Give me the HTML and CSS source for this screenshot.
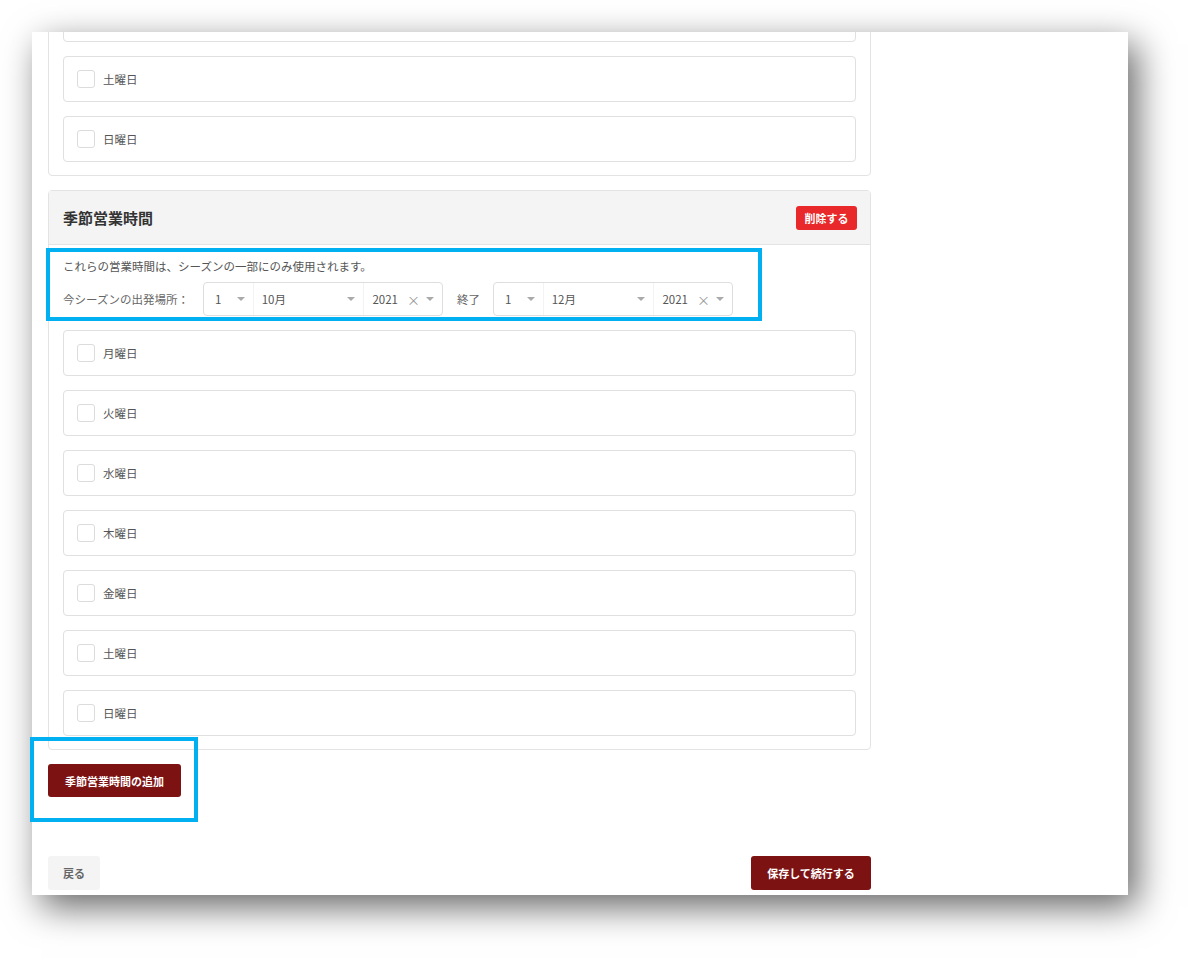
FILE: index.html
```html
<!DOCTYPE html>
<html lang="ja">
<head>
  <meta charset="UTF-8">
  <title>季節営業時間</title>
  <link rel="stylesheet" href="styles.css">
</head>
<body>

<div class="frame">
  <div class="sheet">
    <div class="content">

      <!-- 通常営業時間（上部はスクロールで隠れている） -->
      <div class="card card-top">
        <div class="day-list">
          <div class="day day-blank"></div>
          <label class="day"><span class="check"></span>土曜日</label>
          <label class="day"><span class="check"></span>日曜日</label>
        </div>
      </div>

      <!-- 季節営業時間 -->
      <div class="card">
        <div class="card-head">
          <h2>季節営業時間</h2>
          <button class="btn btn-danger">削除する</button>
        </div>
        <div class="card-body">
          <p class="note">これらの営業時間は、シーズンの一部にのみ使用されます。</p>
          <div class="date-row">
            <span class="label">今シーズンの出発場所：</span>
            <div class="date-select">
              <div class="seg seg-day">1<span class="caret"></span></div>
              <div class="seg seg-month">10月<span class="caret"></span></div>
              <div class="seg seg-year">2021<span class="clear">×</span><span class="caret"></span></div>
            </div>
            <span class="label label-end">終了</span>
            <div class="date-select">
              <div class="seg seg-day">1<span class="caret"></span></div>
              <div class="seg seg-month">12月<span class="caret"></span></div>
              <div class="seg seg-year">2021<span class="clear">×</span><span class="caret"></span></div>
            </div>
          </div>
          <div class="day-list">
            <label class="day"><span class="check"></span>月曜日</label>
            <label class="day"><span class="check"></span>火曜日</label>
            <label class="day"><span class="check"></span>水曜日</label>
            <label class="day"><span class="check"></span>木曜日</label>
            <label class="day"><span class="check"></span>金曜日</label>
            <label class="day"><span class="check"></span>土曜日</label>
            <label class="day"><span class="check"></span>日曜日</label>
          </div>
        </div>
      </div>

      <button class="btn btn-primary btn-add">季節営業時間の追加</button>

      <div class="footer">
        <button class="btn btn-back">戻る</button>
        <button class="btn btn-primary btn-save">保存して続行する</button>
      </div>

    </div>
  </div>

  <!-- 注目枠 -->
  <div class="mark mark-dates"></div>
  <div class="mark mark-add"></div>
</div>

</body>
</html>
```

FILE: styles.css
```css
html, body {
  margin: 0;
  background: #fff;
}

body {
  padding: 32px 0 65px 32px;
  font-family: "Noto Sans CJK JP", "Noto Sans", sans-serif;
  color: #555;
  font-size: 11.5px;
}

.frame {
  position: relative;
  width: 1096px;
  height: 863px;
}

.sheet {
  width: 100%;
  height: 100%;
  overflow: hidden;
  background: #fff;
  box-shadow: 9px 12px 34px rgba(0,0,0,0.6);
}

.content {
  width: 823px;
  padding-left: 16px;
}

.card {
  border: 1px solid #e3e3e3;
  border-radius: 4px;
  margin-bottom: 14px;
}

.card-top {
  margin-top: -51px;
  padding: 14px 14px 13px;
}

.card-head {
  display: flex;
  align-items: center;
  justify-content: space-between;
  height: 53px;
  padding: 0 13px 0 14px;
  background: #f4f4f4;
  border-bottom: 1px solid #e3e3e3;
}

.card-head h2 {
  margin: 0;
  font-size: 15px;
  font-weight: bold;
  color: #333;
}

.card-body {
  padding: 12px 14px 13px;
}

.note {
  margin: 0 0 7px;
  line-height: 18px;
}

.date-row {
  display: flex;
  align-items: center;
  height: 34px;
  margin-bottom: 14px;
}

.label {
  width: 140px;
  color: #666;
}

.label-end {
  width: auto;
  margin: 0 13px 0 14px;
}

.date-select {
  display: flex;
  width: 238px;
  height: 32px;
  border: 1px solid #dedede;
  border-radius: 4px;
}

.seg {
  display: flex;
  align-items: center;
  padding: 0 8px 0 11px;
  color: #555;
}

.seg + .seg {
  border-left: 1px solid #f3f3f3;
}

.seg-day {
  width: 30px;
  justify-content: space-between;
}

.seg-month {
  width: 95px;
  justify-content: space-between;
  padding-left: 8px;
}

.seg-year {
  flex: 1;
  padding-left: 8px;
}

.caret {
  width: 0;
  height: 0;
  border-left: 4px solid transparent;
  border-right: 4px solid transparent;
  border-top: 4px solid #aaa;
}

.seg-year .caret {
  margin-left: 6px;
}

.clear {
  margin-left: 9px;
  color: #999;
  font-size: 13px;
}

.day-list {
  display: flex;
  flex-direction: column;
  gap: 14px;
}

.day {
  display: flex;
  align-items: center;
  height: 44px;
  padding: 0 13px;
  border: 1px solid #e0e0e0;
  border-radius: 4px;
  color: #555;
}

.check {
  width: 16px;
  height: 16px;
  margin-right: 8px;
  border: 1px solid #dcdcdc;
  border-radius: 3px;
  background: #fff;
}

.btn {
  border: none;
  border-radius: 3px;
  font-family: inherit;
  font-size: 11px;
  font-weight: bold;
  cursor: pointer;
}

.btn-danger {
  width: 61px;
  height: 24px;
  background: #e8282b;
  color: #fff;
}

.btn-primary {
  background: #7d1212;
  color: #fff;
}

.btn-add {
  display: block;
  width: 133px;
  height: 33px;
}

.footer {
  display: flex;
  justify-content: space-between;
  margin-top: 59px;
}

.btn-back {
  width: 52px;
  height: 34px;
  background: #f4f4f4;
  color: #666;
}

.btn-save {
  width: 120px;
  height: 34px;
}

.mark {
  position: absolute;
  border: 4px solid #00b0f0;
  box-sizing: border-box;
}

.mark-dates {
  left: 14px;
  top: 216px;
  width: 716px;
  height: 73px;
}

.mark-add {
  left: -2px;
  top: 705px;
  width: 168px;
  height: 85px;
}
```
